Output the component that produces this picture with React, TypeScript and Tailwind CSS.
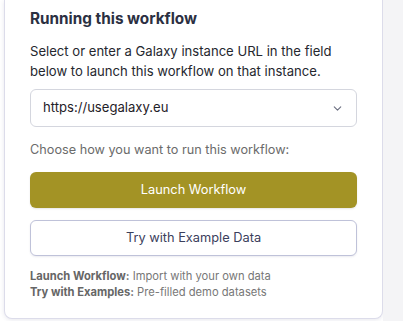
import { ChevronDown } from "lucide-react";

const App = () => {
  return (
    <div className="flex h-[321px] w-[403px] bg-white font-['Inter',sans-serif]">
      <div className="w-[4px] shrink-0 bg-white" />
      <section className="flex h-[319px] w-[379px] shrink-0 flex-col rounded-b-lg border border-t-0 border-[#dcdcea] bg-white px-[25px] shadow-[0_1px_4px_rgba(60,60,110,0.12)]">
        <h2 className="mt-[7px] text-[15.3px] font-bold leading-6 text-[#2b3042]">
          Running this workflow
        </h2>
        <p className="mt-[10px] text-[13.1px] leading-5 text-[#25272e]">
          Select or enter a Galaxy instance URL in the field below to launch this workflow on that instance.
        </p>

        <div className="mt-[8px] flex h-[38px] items-center justify-between rounded-md border border-[#d4d6de] bg-white pl-[12px] pr-[12px]">
          <span className="text-[13.1px] text-[#1f2128]">https://usegalaxy.eu</span>
          <ChevronDown className="h-[13px] w-[13px] text-[#6b6f80]" strokeWidth={2} />
        </div>

        <p className="mt-[13px] text-[12.7px] leading-5 text-[#6b6b6b]">
          Choose how you want to run this workflow:
        </p>

        <button className="mt-[12px] h-[36px] w-full rounded-md bg-[#a39325] text-[12.8px] text-white shadow-[0_1px_2px_rgba(0,0,0,0.1)]">
          Launch Workflow
        </button>
        <button className="mt-[12px] h-[36px] w-full rounded-md border border-[#bfc2d9] bg-white text-[12.8px] text-[#3b405c] shadow-[0_1px_2px_rgba(60,60,110,0.1)]">
          Try with Example Data
        </button>

        <div className="mt-[12px] text-[11.2px] leading-4 text-[#777]">
          <p>
            <span className="font-bold text-[#666]">Launch Workflow:</span> Import with your own data
          </p>
          <p>
            <span className="font-bold text-[#666]">Try with Examples:</span> Pre-filled demo datasets
          </p>
        </div>
      </section>
      <div className="flex-1 bg-[#f4f4f6]" />
    </div>
  );
};

export default App;
